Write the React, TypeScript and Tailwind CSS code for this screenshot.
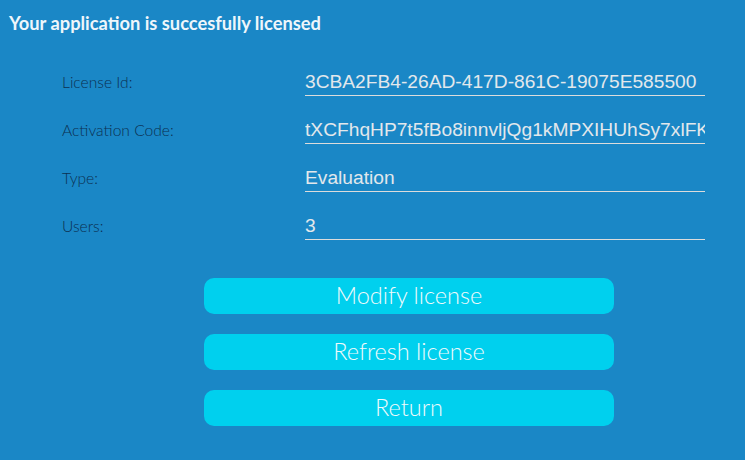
import React from "react";

const rows = [
  { label: "License Id:", value: "3CBA2FB4-26AD-417D-861C-19075E585500" },
  { label: "Activation Code:", value: "tXCFhqHP7t5fBo8innvljQg1kMPXIHUhSy7xlFKq2" },
  { label: "Type:", value: "Evaluation" },
  { label: "Users:", value: "3" },
];

const buttons = ["Modify license", "Refresh license", "Return"];

export default function App() {
  return (
    <div className="w-[745px] h-[460px] bg-[#1a87c6] overflow-hidden font-['Lato',sans-serif]">
      <div className="h-[48px] pl-[9px] pt-[10px] text-[18.3px] font-bold leading-[26px] text-[#eef6fb]">
        Your application is succesfully licensed
      </div>
      <div className="flex flex-col">
        {rows.map((r) => (
          <div key={r.label} className="h-[48px] flex items-end">
            <div className="flex items-baseline">
              <div className="w-[243px] ml-[62px] text-[15.6px] font-light text-[#0c3152]">
                {r.label}
              </div>
              <div className="w-[400px] border-b border-[#dcdcdc] pb-[2px] overflow-hidden whitespace-nowrap font-['Liberation_Sans',Arial,sans-serif] text-[19.2px] leading-[22px] text-[#e2e8ec]">
                {r.value}
              </div>
            </div>
          </div>
        ))}
      </div>
      <div className="mt-[38px] ml-[204px] w-[410px] flex flex-col gap-[20px]">
        {buttons.map((b) => (
          <div
            key={b}
            className="h-[36px] rounded-[10px] bg-[#00d0ee] flex items-center justify-center pb-[1px] text-[23.5px] font-light text-[#f0fafc]"
          >
            {b}
          </div>
        ))}
      </div>
    </div>
  );
}
